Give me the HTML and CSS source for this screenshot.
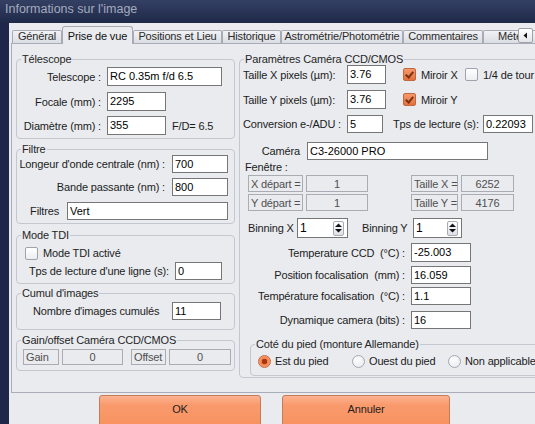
FILE: index.html
```
<!DOCTYPE html>
<html lang="fr">
<head>
    <meta charset="UTF-8">
    <title>Informations sur l'image</title>
    <link rel="stylesheet" href="styles.css">
</head>
<body>
    <div class="window">
        <div class="titlebar">Informations sur l'image</div>
        <div class="client">
            <div class="tabs">
                <div class="tab w-gen">Général</div>
                <div class="tab active w-prise">Prise de vue</div>
                <div class="tab w-pos">Positions et Lieu</div>
                <div class="tab w-hist">Historique</div>
                <div class="tab w-astro">Astrométrie/Photométrie</div>
                <div class="tab w-com">Commentaires</div>
                <div class="tab w-meteo">Météo</div>
                <div class="tab-scroll">
                    <svg width="7" height="7" viewBox="0 0 7 7"><path d="M5 0.5 L1.5 3.5 L5 6.5 Z" fill="#111"/></svg>
                </div>
            </div>

            <div class="page">
                <div class="col-left">
                    <div class="group g-telescope">
                        <div class="legend">Télescope</div>
                        <div class="row h19 mt2">
                            <span class="lbl w84">Telescope :</span>
                            <span class="field w115">RC 0.35m f/d 6.5</span>
                        </div>
                        <div class="row h19 mt6">
                            <span class="lbl w84">Focale (mm) :</span>
                            <span class="field w59">2295</span>
                        </div>
                        <div class="row h19 mt5">
                            <span class="lbl w84">Diamètre (mm) :</span>
                            <span class="field w59">355</span>
                            <span class="fd">F/D= 6.5</span>
                        </div>
                    </div>

                    <div class="group g-filtre">
                        <div class="legend">Filtre</div>
                        <div class="row h18">
                            <span class="lbl w148">Longeur d'onde centrale (nm) :</span>
                            <span class="field short w56">700</span>
                        </div>
                        <div class="row h18 mt5">
                            <span class="lbl w148">Bande passante (nm) :</span>
                            <span class="field short w56">800</span>
                        </div>
                        <div class="row h18 mt6">
                            <span class="lbl w42 gap8">Filtres</span>
                            <span class="field short w161">Vert</span>
                        </div>
                    </div>

                    <div class="group g-tdi">
                        <div class="legend">Mode TDI</div>
                        <div class="row h18 mt3 pad8">
                            <span class="check"></span>
                            <span class="check-label">Mode TDI activé</span>
                        </div>
                        <div class="row h18 pad12">
                            <span class="txt w146">Tps de lecture d'une ligne (s):</span>
                            <span class="field short w47">0</span>
                        </div>
                    </div>

                    <div class="group g-cumul">
                        <div class="legend">Cumul d'images</div>
                        <div class="row h18 mt3 pad16">
                            <span class="txt w139">Nombre d'images cumulés</span>
                            <span class="field short w49">11</span>
                        </div>
                    </div>

                    <div class="group g-gain">
                        <div class="legend">Gain/offset Caméra CCD/CMOS</div>
                        <div class="row h16 mt3 pad6">
                            <span class="cell w36">Gain</span>
                            <span class="cell num w61">0</span>
                            <span class="cell w35 ml5">Offset</span>
                            <span class="cell num w62">0</span>
                        </div>
                    </div>
                </div>

                <div class="group g-camera">
                    <div class="legend">Paramètres Caméra CCD/CMOS</div>
                    <div class="row h19 pad3">
                        <span class="txt w104">Taille X pixels (µm):</span>
                        <span class="field w39">3.76</span>
                        <span class="check on ml17"></span>
                        <span class="check-label w38">Miroir X</span>
                        <span class="check"></span>
                        <span class="check-label">1/4 de tour</span>
                    </div>
                    <div class="row h19 mt6 pad3">
                        <span class="txt w104">Taille Y pixels (µm):</span>
                        <span class="field w39">3.76</span>
                        <span class="check on ml17"></span>
                        <span class="check-label">Miroir Y</span>
                    </div>
                    <div class="row h18 mt6 pad3">
                        <span class="txt w104">Conversion e-/ADU :</span>
                        <span class="field short w36">5</span>
                        <span class="txt w90 ml10">Tps de lecture (s):</span>
                        <span class="field short w50">0.22093</span>
                    </div>
                    <div class="row h18 mt9 pad25">
                        <span class="lbl w35">Caméra</span>
                        <span class="field short w181 ml7">C3-26000 PRO</span>
                    </div>
                    <div class="row h12 mt1 pad5">Fenêtre :</div>
                    <div class="row h17 mt2 pad8">
                        <span class="cell w55">X départ =</span>
                        <span class="cell num w62">1</span>
                        <span class="cell w47 ml40">Taille X =</span>
                        <span class="cell num w53">6252</span>
                    </div>
                    <div class="row h17 mt2 pad8">
                        <span class="cell w55">Y départ =</span>
                        <span class="cell num w62">1</span>
                        <span class="cell w47 ml40">Taille Y =</span>
                        <span class="cell num w53">4176</span>
                    </div>
                    <div class="row h20 mt7 pad8">
                        <span class="txt w49">Binning X</span>
                        <span class="spin w51">1<span class="spin-btn"><svg width="9" height="12" viewBox="0 0 9 12"><path d="M4.5 1.5 L8 5 L1 5 Z M1 7 L8 7 L4.5 10.5 Z" fill="#111"/></svg></span></span>
                        <span class="txt w51 ml14">Binning Y</span>
                        <span class="spin w49">1<span class="spin-btn"><svg width="9" height="12" viewBox="0 0 9 12"><path d="M4.5 1.5 L8 5 L1 5 Z M1 7 L8 7 L4.5 10.5 Z" fill="#111"/></svg></span></span>
                    </div>
                    <div class="row h19 mt5">
                        <span class="lbl w165">Temperature CCD  (°C) :</span>
                        <span class="field w60 ml6">-25.003</span>
                    </div>
                    <div class="row h18 mt4">
                        <span class="lbl w165">Position focalisation  (mm) :</span>
                        <span class="field short w60 ml6">16.059</span>
                    </div>
                    <div class="row h18 mt3">
                        <span class="lbl w165">Température focalisation  (°C) :</span>
                        <span class="field short w60 ml6">1.1</span>
                    </div>
                    <div class="row h18 mt6">
                        <span class="lbl w165">Dynamique camera (bits) :</span>
                        <span class="field short w60 ml6">16</span>
                    </div>

                    <div class="group g-pied">
                        <div class="legend">Coté du pied (monture Allemande)</div>
                        <div class="row h18 mt2 pad7">
                            <span class="radio-item w94"><span class="radio on"></span>Est du pied</span>
                            <span class="radio-item w96"><span class="radio"></span>Ouest du pied</span>
                            <span class="radio-item"><span class="radio"></span>Non applicable</span>
                        </div>
                    </div>
                </div>
            </div>

            <div class="buttons">
                <div class="btn btn-ok">OK</div>
                <div class="btn btn-cancel">Annuler</div>
            </div>
        </div>
    </div>
</body>
</html>
```

FILE: styles.css
```
body {
    margin: 0;
    width: 535px;
    height: 424px;
    overflow: hidden;
    background: #1e2749;
    font-family: "Liberation Sans", Arial, sans-serif;
    font-size: 11px;
    letter-spacing: -0.15px;
    color: #1c1c1c;
}

.window {
    width: 620px;
}

.titlebar {
    height: 23px;
    line-height: 19px;
    padding-left: 5px;
    font-size: 12.5px;
    letter-spacing: 0;
    color: #a3abbf;
    background: linear-gradient(#344063, #1f2949);
}

.client {
    margin-left: 9px;
    padding-left: 2px;
    height: 401px;
    background: #e9ebef;
}

/* tab strip */

.tabs {
    position: relative;
    display: flex;
    align-items: flex-end;
    height: 20px;
    padding-left: 1px;
}

.tab {
    box-sizing: border-box;
    height: 13px;
    line-height: 11px;
    border: 1px solid #a6abb6;
    border-bottom: none;
    border-radius: 2px 2px 0 0;
    background: linear-gradient(#f1f2f5, #dadde3);
    text-align: center;
    white-space: nowrap;
    overflow: hidden;
    color: #2b2b2b;
}

.tab.active {
    position: relative;
    z-index: 1;
    height: 18px;
    line-height: 18px;
    margin-bottom: -1px;
    background: #e9ebef;
    border-radius: 3px 3px 0 0;
    color: #111;
}

.w-gen { width: 50px; }
.w-prise { width: 71px; }
.w-pos { width: 89px; }
.w-hist { width: 59px; }
.w-astro { width: 122px; }
.w-com { width: 80px; }
.w-meteo { width: 60px; }

.tab-scroll {
    position: absolute;
    left: 507px;
    top: 5px;
    width: 15px;
    height: 15px;
    box-sizing: border-box;
    border: 1px solid #9ca1ab;
    border-radius: 2px;
    background: linear-gradient(#ffffff, #e3e5ea);
    display: flex;
    align-items: center;
    justify-content: center;
    z-index: 2;
}

/* tab page */

.page {
    box-sizing: border-box;
    height: 350px;
    border: 1px solid #a8adb7;
    padding: 15px 0 0 4px;
    display: flex;
    align-items: flex-start;
    gap: 4px;
}

.col-left {
    width: 219px;
    display: flex;
    flex-direction: column;
}

/* group box: the caption sits over the top border */
.group {
    border: 1px solid #c3c7d0;
    border-radius: 4px;
}

.group .legend {
    width: max-content;
    height: 12px;
    line-height: 12px;
    margin: -7px 0 0 4px;
    padding: 0 1px;
    background: #e9ebef;
    color: #262626;
}

.g-telescope { padding-bottom: 3px; }
.g-filtre { margin-top: 10px; padding-bottom: 3px; }
.g-tdi { margin-top: 11px; padding-bottom: 3px; }
.g-cumul { margin-top: 9px; padding-bottom: 9px; }
.g-gain { margin-top: 10px; padding-bottom: 5px; }

.g-camera {
    width: 320px;
    box-sizing: border-box;
    padding-bottom: 1px;
}

.g-pied {
    margin: 15px 0 0 10px;
    padding-bottom: 5px;
    width: 300px;
}

/* rows */

.row {
    display: flex;
    align-items: center;
    white-space: pre;
}

.h12 { height: 12px; }
.h16 { height: 16px; }
.h17 { height: 17px; }
.h18 { height: 18px; }
.h19 { height: 19px; }
.h20 { height: 20px; }

.mt1 { margin-top: 1px; }
.mt2 { margin-top: 2px; }
.mt3 { margin-top: 3px; }
.mt4 { margin-top: 4px; }
.mt5 { margin-top: 5px; }
.mt6 { margin-top: 6px; }
.mt7 { margin-top: 7px; }
.mt9 { margin-top: 9px; }

.pad3 { padding-left: 3px; }
.pad5 { padding-left: 5px; }
.pad6 { padding-left: 6px; }
.pad7 { padding-left: 7px; }
.pad8 { padding-left: 8px; }
.pad12 { padding-left: 12px; }
.pad16 { padding-left: 16px; }
.pad25 { padding-left: 25px; }

.ml5 { margin-left: 5px; }
.ml6 { margin-left: 6px; }
.ml7 { margin-left: 7px; }
.ml10 { margin-left: 10px; }
.ml14 { margin-left: 14px; }
.ml17 { margin-left: 17px; }
.ml40 { margin-left: 40px; }

/* right-aligned label: overflow goes to the left */
.lbl {
    flex: none;
    display: flex;
    justify-content: flex-end;
    margin-right: 6px;
}

.lbl.w148 { margin-right: 7px; }
.lbl.gap8 { margin-right: 8px; }
.lbl.w35 { margin-right: 0; }
.lbl.w165 { margin-right: 0; }

.txt {
    flex: none;
}

.w35 { width: 35px; }
.w36 { width: 36px; }
.w38 { width: 38px; }
.w39 { width: 39px; }
.w42 { width: 42px; }
.w47 { width: 47px; }
.w49 { width: 49px; }
.w50 { width: 50px; }
.w51 { width: 51px; }
.w53 { width: 53px; }
.w55 { width: 55px; }
.w56 { width: 56px; }
.w59 { width: 59px; }
.w60 { width: 60px; }
.w61 { width: 61px; }
.w62 { width: 62px; }
.w84 { width: 84px; }
.w90 { width: 90px; }
.w94 { width: 94px; }
.w96 { width: 96px; }
.w104 { width: 104px; }
.w115 { width: 115px; }
.w139 { width: 139px; }
.w146 { width: 146px; }
.w148 { width: 148px; }
.w161 { width: 161px; }
.w165 { width: 165px; }
.w181 { width: 181px; }

.field {
    flex: none;
    box-sizing: border-box;
    height: 19px;
    line-height: 17px;
    padding: 0 2px;
    border: 1px solid #767676;
    background: #fff;
    color: #000;
    letter-spacing: 0;
    overflow: hidden;
}

.field.short {
    height: 18px;
    line-height: 16px;
}

.fd {
    margin-left: 6px;
}

.cell {
    flex: none;
    box-sizing: border-box;
    height: 100%;
    padding: 0 2px;
    border: 1px solid #a9acb2;
    color: #505050;
    display: flex;
    align-items: center;
    margin-right: 3px;
}

.cell.num {
    justify-content: center;
}

/* check boxes and radios */

.check {
    flex: none;
    box-sizing: border-box;
    width: 13px;
    height: 13px;
    border: 1px solid #9ea3ad;
    border-radius: 2px;
    background: linear-gradient(#ffffff, #eceef2);
}

.check.on {
    border-color: #c0693f;
    background: linear-gradient(#f59a6c, #e56f3b);
    position: relative;
}

.check.on::after {
    content: "";
    position: absolute;
    left: 3px;
    top: 1px;
    width: 3px;
    height: 6px;
    border: solid #7a3214;
    border-width: 0 2px 2px 0;
    transform: rotate(40deg);
}

.check-label {
    flex: none;
    margin-left: 5px;
    margin-right: 6px;
}

.radio-item {
    flex: none;
    display: flex;
    align-items: center;
    gap: 4px;
}

.radio {
    flex: none;
    box-sizing: border-box;
    width: 13px;
    height: 13px;
    border: 1px solid #a3a8b2;
    border-radius: 50%;
    background: radial-gradient(circle at 40% 35%, #ffffff, #e2e5ea);
}

.radio.on {
    border-color: #c66a40;
    background: radial-gradient(circle, #a9360f 0 2.5px, #f27f4b 3px, #f9a47c 6px);
}

/* spin edit */

.spin {
    flex: none;
    box-sizing: border-box;
    height: 20px;
    line-height: 18px;
    padding-left: 2px;
    border: 1px solid #767676;
    background: #fff;
    color: #000;
    display: flex;
    align-items: center;
    justify-content: space-between;
    font-size: 12px;
}

.spin-btn {
    width: 11px;
    height: 15px;
    margin-right: 3px;
    border: 1px solid #a8acb4;
    border-radius: 2px;
    box-sizing: border-box;
    background: linear-gradient(#ffffff, #dcdfe5);
    display: flex;
    align-items: center;
    justify-content: center;
}

/* dialog buttons */

.buttons {
    display: flex;
    gap: 21px;
    margin-top: 2px;
    padding-left: 88px;
}

.btn {
    box-sizing: border-box;
    height: 32px;
    padding-top: 6px;
    line-height: 14px;
    text-align: center;
    border: 1px solid #c47b57;
    border-radius: 3px;
    background: linear-gradient(#fcb392 0, #f99a6d 30%, #f8925f 100%);
    color: #1e1e1e;
}

.btn-ok { width: 162px; }
.btn-cancel { width: 168px; }
```
